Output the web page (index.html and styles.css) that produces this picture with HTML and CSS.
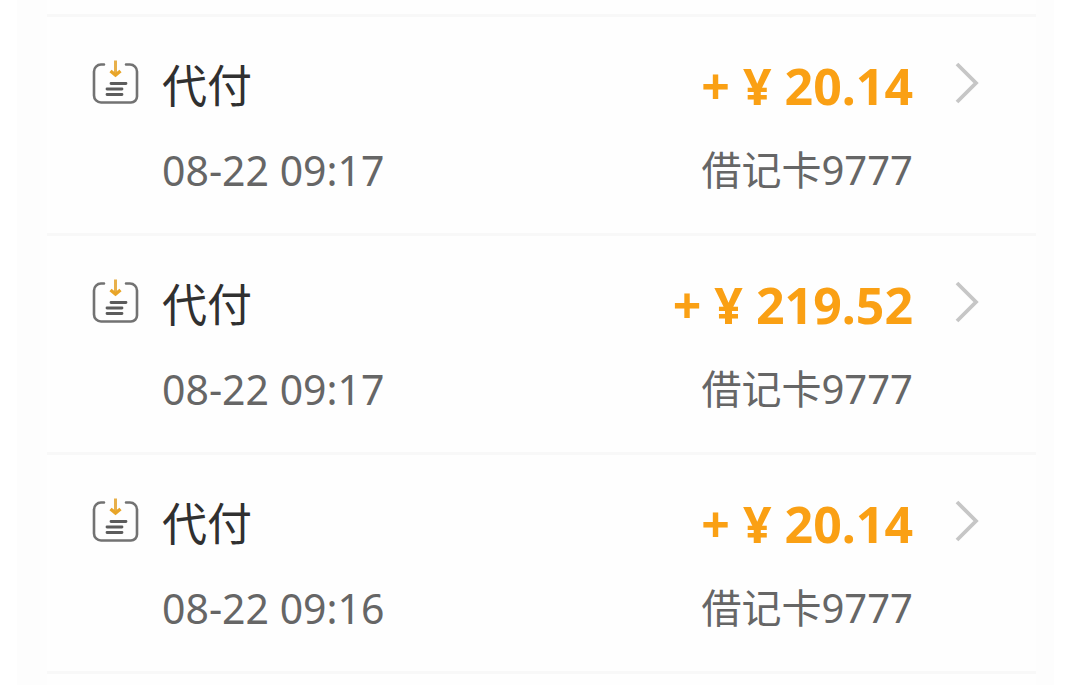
FILE: index.html
```
<!DOCTYPE html>
<html lang="zh-CN">
<head>
    <meta charset="UTF-8">
    <meta name="viewport" content="width=device-width, initial-scale=1.0">
    <title>交易明细</title>
    <link rel="stylesheet" href="styles.css">
</head>
<body>

<svg class="sprite" aria-hidden="true">
    <symbol id="icon-receive" viewBox="0 0 48 48">
        <path d="M12 5.500H9a7 7 0 0 0-7 7v24a7 7 0 0 0 7 7h30a6 6 0 0 0 6-6v-25a7 7 0 0 0-7-7h-4" fill="none" stroke="#727272" stroke-width="2.600" stroke-linecap="round"/>
        <path d="M19 24.500H34M15 30H30M15 35.500H30" fill="none" stroke="#5c5c5c" stroke-width="2.800" stroke-linecap="round"/>
        <path d="M23.500 1.500V15" fill="none" stroke="#e8b04a" stroke-width="3"/>
        <path d="M18.500 12l5 4 5-4" fill="none" stroke="#e8a528" stroke-width="3.400"/>
    </symbol>
    <symbol id="icon-arrow" viewBox="0 0 26 42">
        <path d="M3 2l19 19L3 40" fill="none" stroke="#c6c6c6" stroke-width="3.800"/>
    </symbol>
</svg>

<main class="list">
    <a class="row" href="#">
        <svg class="type-icon"><use href="#icon-receive"/></svg>
        <div class="info">
            <span class="title">代付</span>
            <time class="date">08-22 09:17</time>
        </div>
        <div class="money">
            <strong class="amount">+ ¥ 20.14</strong>
            <span class="card">借记卡9777</span>
        </div>
        <svg class="arrow"><use href="#icon-arrow"/></svg>
    </a>
    <a class="row" href="#">
        <svg class="type-icon"><use href="#icon-receive"/></svg>
        <div class="info">
            <span class="title">代付</span>
            <time class="date">08-22 09:17</time>
        </div>
        <div class="money">
            <strong class="amount">+ ¥ 219.52</strong>
            <span class="card">借记卡9777</span>
        </div>
        <svg class="arrow"><use href="#icon-arrow"/></svg>
    </a>
    <a class="row" href="#">
        <svg class="type-icon"><use href="#icon-receive"/></svg>
        <div class="info">
            <span class="title">代付</span>
            <time class="date">08-22 09:16</time>
        </div>
        <div class="money">
            <strong class="amount">+ ¥ 20.14</strong>
            <span class="card">借记卡9777</span>
        </div>
        <svg class="arrow"><use href="#icon-arrow"/></svg>
    </a>
</main>

</body>
</html>
```

FILE: styles.css
```
* {
    box-sizing: border-box;
}
body {
    margin: 0;
    padding: 0 26px 0 17px;
    background-color: #fff;
    font-family: "Noto Sans", "Noto Sans CJK SC", sans-serif;
}
.sprite {
    display: none;
}
.list {
    min-height: 100vh;
    padding-top: 14px;
    background-color: #fefefe;
    border-left: 30px solid #fdfdfd;
    border-right: 18px solid #fdfdfd;
}
.row {
    display: flex;
    align-items: flex-start;
    padding: 33px 56px 27px 45px;
    border-bottom: 3px solid #f8f8f8;
    color: #666;
    text-decoration: none;
}
.row:first-child {
    border-top: 3px solid #f8f8f8;
}
.type-icon {
    flex: none;
    width: 48px;
    height: 48px;
    margin: 9px 22px 0 0;
}
.info, .money {
    display: flex;
    flex-direction: column;
    gap: 12px;
    line-height: 72px;
    white-space: nowrap;
}
.info {
    flex: 1;
}
.money {
    align-items: flex-end;
}
.title {
    color: #303030;
    font-size: 45px;
}
.date {
    font-size: 41px;
}
.amount {
    color: #faa014;
    font-size: 50px;
    font-weight: 700;
}
.card {
    font-size: 40px;
}
.arrow {
    flex: none;
    width: 26px;
    height: 42px;
    margin: 12px 0 0 41px;
}
```
